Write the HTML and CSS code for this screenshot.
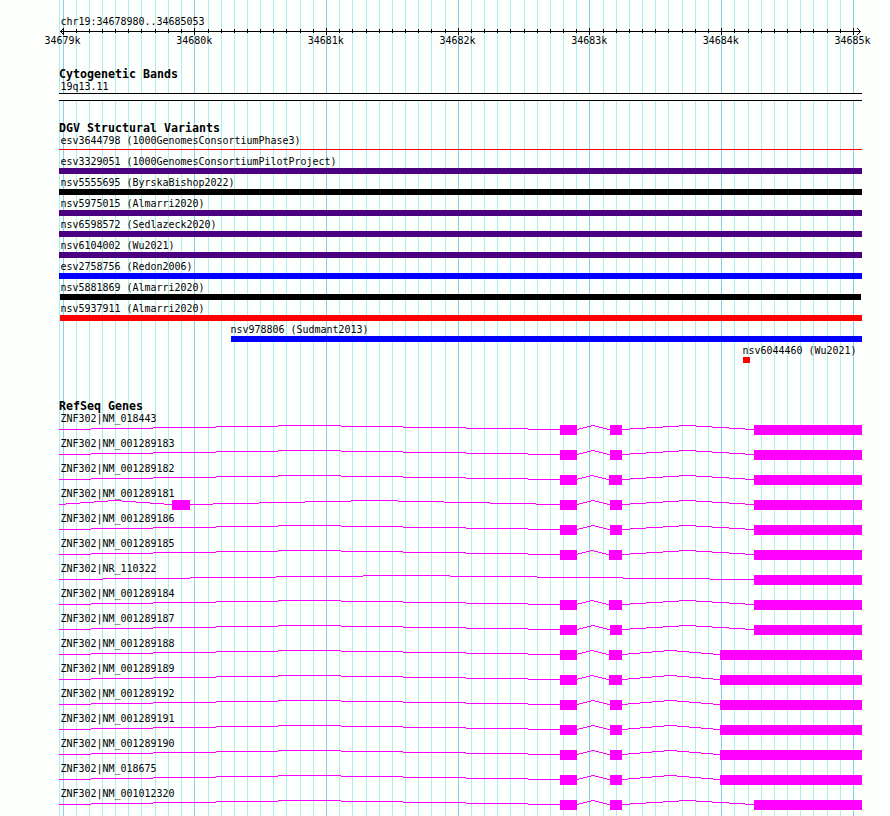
FILE: index.html
```
<!DOCTYPE html>
<html lang="en">
<head>
  <meta charset="UTF-8">
  <title>chr19:34678980..34685053</title>
  <link rel="stylesheet" href="styles.css">
</head>
<body>
  <main class="browser">
    <svg class="grid" id="grid" width="890" height="816"></svg>

    <!-- Ruler -->
    <section class="ruler">
      <div class="label">chr19:34678980..34685053</div>
      <svg class="axis" id="axis" width="890" height="7"></svg>
      <div class="scale">
        <span>34679k</span>
        <span>34680k</span>
        <span>34681k</span>
        <span>34682k</span>
        <span>34683k</span>
        <span>34684k</span>
        <span>34685k</span>
      </div>
    </section>

    <!-- Cytogenetic bands -->
    <section class="cyto">
      <h2>Cytogenetic Bands</h2>
      <div class="label">19q13.11</div>
      <div class="band"></div>
    </section>

    <!-- Structural variants -->
    <section class="variants">
      <h2>DGV Structural Variants</h2>
      <div id="variants"></div>
    </section>

    <!-- Genes -->
    <section class="genes">
      <h2>RefSeq Genes</h2>
      <div id="genes"></div>
    </section>
  </main>

  <script src="script.js"></script>
</body>
</html>
```

FILE: styles.css
```
* {
  margin: 0;
  padding: 0;
  box-sizing: border-box;
}

body {
  background-color: #fdfffc;
  color: #000;
  font-family: "DejaVu Sans Mono", monospace;
  font-size: 9.97px;
  line-height: 12px;
}

.browser {
  position: relative;
  width: 890px;
  height: 816px;
  overflow: hidden;
}

/* Lines behind all the tracks */
.grid {
  position: absolute;
  top: 0;
  left: 0;
  z-index: -1;
}

svg {
  display: block;
  shape-rendering: crispEdges;
}

.minor {
  fill: #afeeee;
}

.major {
  fill: #87ceeb;
}

h2 {
  font-size: 11.63px;
  line-height: 15px;
  height: 13px;
  padding-left: 59px;
}

.label {
  height: 12px;
  line-height: 14px;
  padding-left: 60.5px;
  white-space: pre;
}

/* Ruler */
.ruler {
  height: 67px;
  padding-top: 15px;
}

.axis {
  margin-top: 1px;
}

.scale {
  display: flex;
  justify-content: space-between;
  width: 826px;
  margin-left: 44.5px;
}

/* Cytogenetic bands */
.cyto {
  height: 54px;
}

.cyto .label {
  height: 13px;
}

.band {
  width: 803px;
  height: 8px;
  margin-left: 59px;
  background-color: #fdfffc;
  border-top: 1px solid #000;
  border-bottom: 1px solid #000;
}

/* Structural variants */
.variants {
  height: 278px;
}

.variant {
  height: 21px;
}

.loss {
  fill: #f00;
}

.gain {
  fill: #00f;
}

.complex {
  fill: #4b0082;
}

.other {
  fill: #000;
}

/* Genes */
.gene {
  height: 25px;
  fill: #f0f;
}
```

FILE: script.js
```
const SVG_NS = "http://www.w3.org/2000/svg";

function addRect(svg, x, y, width, height, className) {
  const rect = document.createElementNS(SVG_NS, "rect");
  rect.setAttribute("x", x);
  rect.setAttribute("y", y);
  rect.setAttribute("width", width);
  rect.setAttribute("height", height);
  if (className) rect.setAttribute("class", className);
  svg.appendChild(rect);
}

// One row: a text label with a drawing below it
function addRow(parent, className, name, labelX, height) {
  const row = document.createElement("div");
  row.className = className;
  const label = document.createElement("div");
  label.className = "label";
  label.textContent = name;
  if (labelX) label.style.paddingLeft = labelX + "px";
  const svg = document.createElementNS(SVG_NS, "svg");
  svg.setAttribute("width", 890);
  svg.setAttribute("height", height);
  row.append(label, svg);
  parent.appendChild(row);
  return svg;
}

// Grid and ruler, every tenth line is a major one
const lines = [
  63, 76, 89, 102, 115, 128, 141, 155, 168, 181,
  194, 208, 221, 234, 247, 260, 273, 286, 300, 313,
  326, 339, 352, 366, 379, 392, 405, 418, 431, 445,
  458, 471, 484, 497, 510, 524, 537, 550, 563, 576,
  589, 603, 616, 629, 642, 655, 668, 682, 695, 708,
  721, 734, 748, 761, 774, 787, 800, 813, 827, 840,
  853
];
const grid = document.getElementById("grid");
const axis = document.getElementById("axis");

addRect(grid, 59, 0, 1, 816, "minor");
addRect(axis, 60, 3, 801, 1);
lines.forEach((x, i) => {
  const major = i % 10 === 0;
  addRect(grid, x, 0, 1, 816, major ? "major" : "minor");
  addRect(axis, x, major ? 0 : 1, 1, major ? 7 : 4);
});
for (let i = 1; i <= 3; i++) {
  addRect(axis, 60 + i, 3 - i, 1, 1);
  addRect(axis, 60 + i, 3 + i, 1, 1);
  addRect(axis, 860 - i, 3 - i, 1, 1);
  addRect(axis, 860 - i, 3 + i, 1, 1);
}

// Variants: name, type, start, end, label position
const variants = [
  ["esv3644798 (1000GenomesConsortiumPhase3)", "loss", 59, 862],
  ["esv3329051 (1000GenomesConsortiumPilotProject)", "complex", 59, 862],
  ["nsv5555695 (ByrskaBishop2022)", "other", 59, 862],
  ["nsv5975015 (Almarri2020)", "complex", 59, 862],
  ["nsv6598572 (Sedlazeck2020)", "complex", 59, 862],
  ["nsv6104002 (Wu2021)", "complex", 59, 862],
  ["esv2758756 (Redon2006)", "gain", 59, 862],
  ["nsv5881869 (Almarri2020)", "other", 60, 861],
  ["nsv5937911 (Almarri2020)", "loss", 60, 862],
  ["nsv978806 (Sudmant2013)", "gain", 231, 862, 230.5],
  ["nsv6044460 (Wu2021)", "loss", 743, 750, 742.5]
];

const variantTrack = document.getElementById("variants");
variants.forEach(([name, type, start, end, labelX], i) => {
  const svg = addRow(variantTrack, "variant", name, labelX, 9);
  if (i === 0) {
    addRect(svg, start, 3, end - start, 1, type);
  } else {
    addRect(svg, start, 1, end - start, 6, type);
  }
});

// Introns: x of each one pixel step, rising to the middle and falling again
const first = [59, 91, 153, 216, 278, 341, 403, 466, 528, 560];
const hopA = [577, 579, 583, 587, 591, 595, 599, 603, 607, 610];
const hopB = [577, 578, 582, 586, 590, 594, 598, 602, 606, 609];
const longEnd = [622, 630, 646, 663, 679, 696, 712, 729, 745, 754];
const shortEnd = [622, 628, 640, 652, 664, 677, 689, 701, 713, 720];
const splitLeft = [59, 66, 80, 94, 108, 122, 136, 150, 164, 172];
const splitRight = [190, 213, 259, 305, 351, 398, 444, 490, 536, 560];
const whole = [59, 103, 190, 276, 363, 450, 537, 623, 710, 754];

const genes = [
  ["NM_018443", [first, hopA, longEnd]],
  ["NM_001289183", [first, hopA, longEnd]],
  ["NM_001289182", [first, hopB, longEnd]],
  ["NM_001289181", [splitLeft, splitRight, hopA, longEnd]],
  ["NM_001289186", [first, hopA, longEnd]],
  ["NM_001289185", [first, hopB, longEnd]],
  ["NR_110322", [whole]],
  ["NM_001289184", [first, hopB, longEnd]],
  ["NM_001289187", [first, hopA, longEnd]],
  ["NM_001289188", [first, hopB, shortEnd]],
  ["NM_001289189", [first, hopB, shortEnd]],
  ["NM_001289192", [first, hopA, shortEnd]],
  ["NM_001289191", [first, hopA, shortEnd]],
  ["NM_001289190", [first, hopA, shortEnd]],
  ["NM_018675", [first, hopA, shortEnd]],
  ["NM_001012320", [first, hopA, longEnd]]
];

const geneTrack = document.getElementById("genes");
genes.forEach(([name, introns]) => {
  const svg = addRow(geneTrack, "gene", "ZNF302|" + name, 0, 13);
  introns.forEach((steps, n) => {
    for (let i = 0; i < 9; i++) {
      addRect(svg, steps[i], 1 + Math.abs(4 - i), steps[i + 1] - steps[i], 1);
    }
    // exon fills the space up to the next intron
    const next = introns[n + 1] ? introns[n + 1][0] : 862;
    addRect(svg, steps[9], 1, next - steps[9], 10);
  });
});
```
